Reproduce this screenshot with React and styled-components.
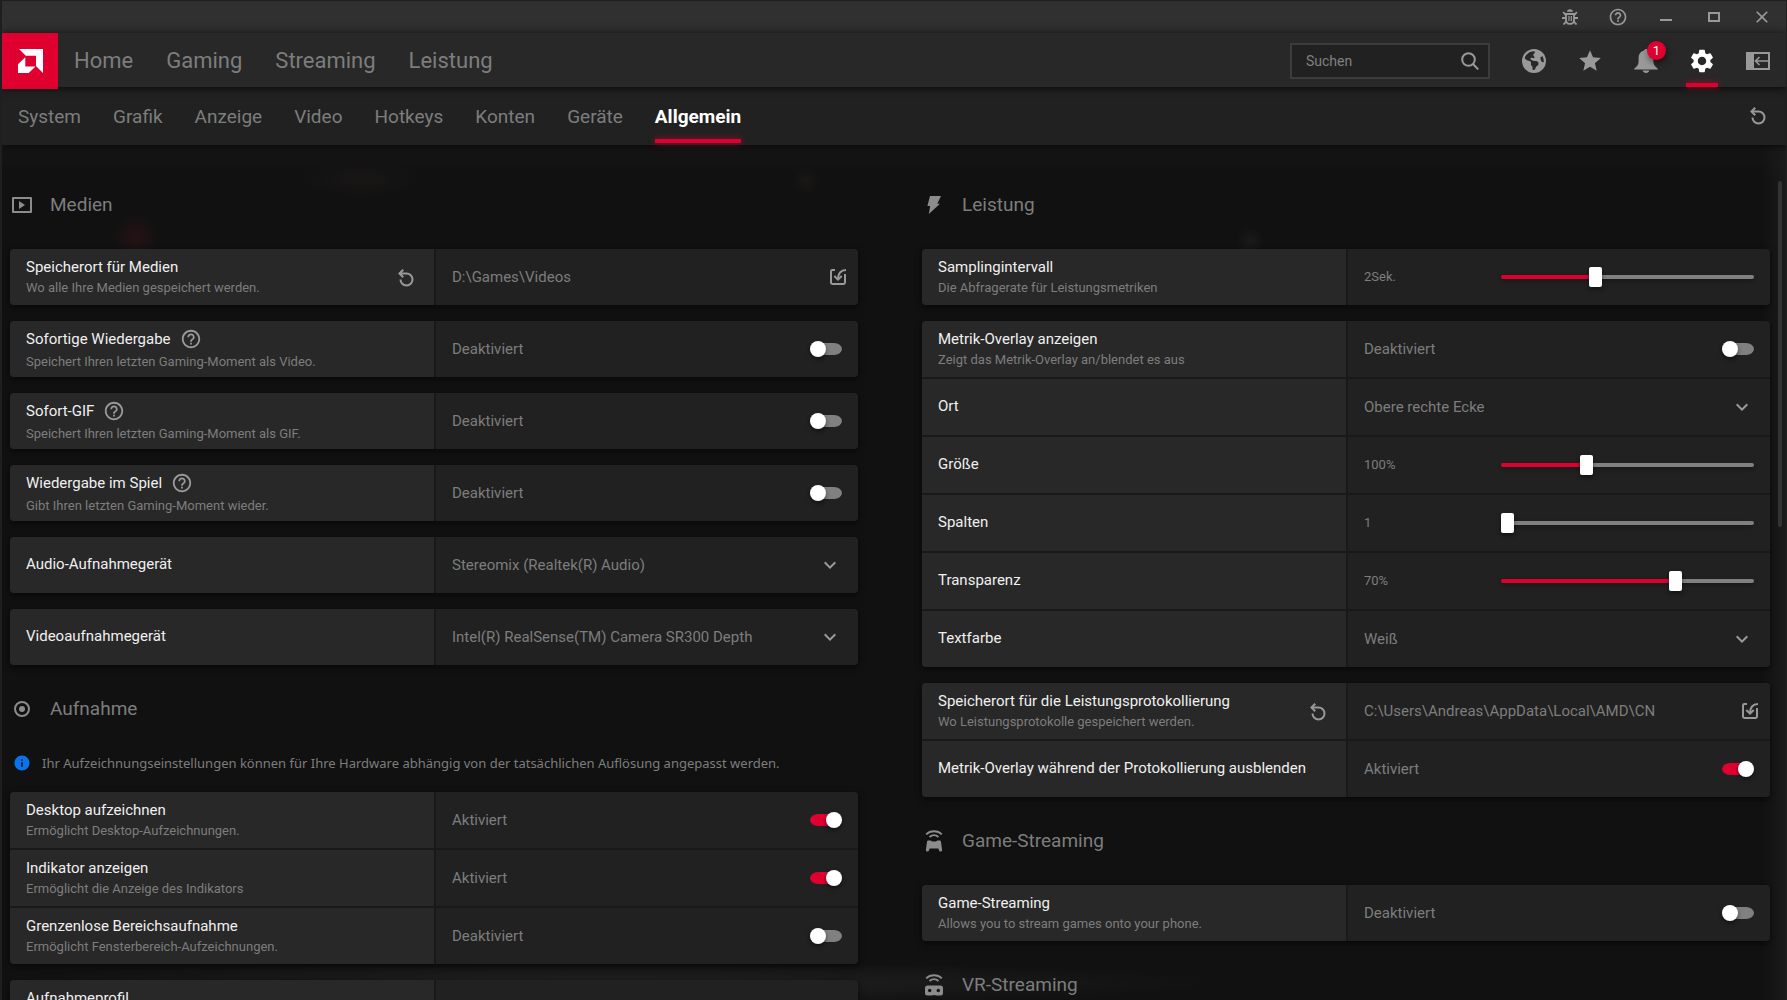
import React, { useId, useState } from 'react';
import styled, { createGlobalStyle, css, ThemeProvider } from 'styled-components';
import { MdClose, MdExpandMore, MdHelpOutline, MdInfo, MdSettings, MdStar } from 'react-icons/md';
import { FaEarthAmericas } from 'react-icons/fa6';

const theme = {
    fonts: {
        primary: "Roboto, 'Liberation Sans', sans-serif",
        secondary: "'Noto Sans', 'Open Sans', sans-serif",
    },
    colors: {
        red: '#df0030',
        text: '#f0f0f0',
        muted: '#7d7d7d',
        icon: '#999999',
        titlebar: '#303030',
        header: '#282828',
        panel: '#212121',
        line: '#191919',
    },
};

const mainNav = ['Home', 'Gaming', 'Streaming', 'Leistung'];
const subNav = ['System', 'Grafik', 'Anzeige', 'Video', 'Hotkeys', 'Konten', 'Geräte', 'Allgemein'];

const leftSections = [
    {
        title: 'Medien',
        icon: 'media',
        groups: [
            [{ title: 'Speicherort für Medien', desc: 'Wo alle Ihre Medien gespeichert werden.', reset: true, type: 'path', value: 'D:\\Games\\Videos' }],
            [{ title: 'Sofortige Wiedergabe', desc: 'Speichert Ihren letzten Gaming-Moment als Video.', help: true, type: 'toggle' }],
            [{ title: 'Sofort-GIF', desc: 'Speichert Ihren letzten Gaming-Moment als GIF.', help: true, type: 'toggle' }],
            [{ title: 'Wiedergabe im Spiel', desc: 'Gibt Ihren letzten Gaming-Moment wieder.', help: true, type: 'toggle' }],
            [{ title: 'Audio-Aufnahmegerät', type: 'select', value: 'Stereomix (Realtek(R) Audio)' }],
            [{ title: 'Videoaufnahmegerät', type: 'select', value: 'Intel(R) RealSense(TM) Camera SR300 Depth' }],
        ],
    },
    {
        title: 'Aufnahme',
        icon: 'record',
        info: 'Ihr Aufzeichnungseinstellungen können für Ihre Hardware abhängig von der tatsächlichen Auflösung angepasst werden.',
        groups: [
            [
                { title: 'Desktop aufzeichnen', desc: 'Ermöglicht Desktop-Aufzeichnungen.', type: 'toggle', on: true },
                { title: 'Indikator anzeigen', desc: 'Ermöglicht die Anzeige des Indikators', type: 'toggle', on: true },
                { title: 'Grenzenlose Bereichsaufnahme', desc: 'Ermöglicht Fensterbereich-Aufzeichnungen.', type: 'toggle' },
            ],
            [{ title: 'Aufnahmeprofil', desc: '\u00a0' }],
        ],
    },
];

const rightSections = [
    {
        title: 'Leistung',
        icon: 'bolt',
        groups: [
            [{ title: 'Samplingintervall', desc: 'Die Abfragerate für Leistungsmetriken', type: 'slider', percent: 37, unit: '2Sek.' }],
            [
                { title: 'Metrik-Overlay anzeigen', desc: 'Zeigt das Metrik-Overlay an/blendet es aus', type: 'toggle' },
                { title: 'Ort', type: 'select', value: 'Obere rechte Ecke' },
                { title: 'Größe', type: 'slider', percent: 33, unit: '100%' },
                { title: 'Spalten', type: 'slider', percent: 0, unit: '1' },
                { title: 'Transparenz', type: 'slider', percent: 70, unit: '70%' },
                { title: 'Textfarbe', type: 'select', value: 'Weiß' },
            ],
            [
                { title: 'Speicherort für die Leistungsprotokollierung', desc: 'Wo Leistungsprotokolle gespeichert werden.', reset: true, type: 'path', value: 'C:\\Users\\Andreas\\AppData\\Local\\AMD\\CN' },
                { title: 'Metrik-Overlay während der Protokollierung ausblenden', type: 'toggle', on: true },
            ],
        ],
    },
    {
        title: 'Game-Streaming',
        icon: 'gamepad',
        groups: [[{ title: 'Game-Streaming', desc: 'Allows you to stream games onto your phone.', type: 'toggle' }]],
    },
    { title: 'VR-Streaming', icon: 'vr', groups: [] },
];

function UndoIcon() {
    return (
        <svg width="16" height="18" viewBox="0 0 16 18" fill="none" stroke="currentColor" strokeWidth="2">
            <path d="M1.5 4.5H8.5a6 6 0 1 1-6 6" />
            <path d="M5.2.8 1.5 4.5l3.7 3.7" />
        </svg>
    );
}

function BrowseIcon() {
    return (
        <svg width="16" height="16" viewBox="0 0 16 16" fill="none" stroke="currentColor" strokeWidth="2">
            <path d="M5 1H2.4A1.4 1.4 0 0 0 1 2.4v11.2A1.4 1.4 0 0 0 2.4 15h11.2a1.4 1.4 0 0 0 1.4-1.4V5" />
            <path d="M16 1C10.5 1 8 4 8 10.5" />
            <path d="M4.3 7 8 10.7 11.7 7" />
        </svg>
    );
}

function BugIcon() {
    return (
        <svg width="16" height="16" viewBox="0 0 16 16" fill="none" stroke="currentColor" strokeWidth="1.8">
            <path d="M5 2.8C5 1 6.2.2 8 .2s3 .8 3 2.6z" fill="currentColor" stroke="none" />
            <path d="M4 5h8v6.5a3.300 3.300 0 0 1-3.300 3.300H7.300A3.300 3.300 0 0 1 4 11.500z" />
            <path d="M7 7v5M9.300 7v5" strokeWidth="1.2" />
            <path d="M4 6.500 1.200 3M12 6.500 14.800 3M4 9H0M12 9h4M4.500 12 1.500 15.500M11.500 12l3 3.500" />
        </svg>
    );
}

function BellIcon() {
    return (
        <svg width="24" height="24" viewBox="0 0 24 24" fill="currentColor">
            <path d="M12 0c-1 0-1.700.6-1.900 1.500C6.500 2.400 4.600 5.500 4.600 9v3.500c0 3-1.600 5-4.400 7.200v.8h23.600v-.8c-2.800-2.200-4.400-4.200-4.400-7.200V9c0-3.500-1.900-6.600-5.500-7.500C13.700.6 13 0 12 0z" />
            <path d="M8.600 21.600h6.800c-.4 1.500-1.700 2.400-3.400 2.400s-3-.9-3.400-2.400z" />
        </svg>
    );
}

function PanelIcon() {
    return (
        <svg width="24" height="18" viewBox="0 0 24 18" fill="none" stroke="currentColor" strokeWidth="2">
            <path d="M1 1h22v16H1z" />
            <path d="M1 1h6v16H1z" fill="currentColor" />
            <path d="M22 9H10M13.5 5 9.5 9l4 4" strokeWidth="1.6" />
        </svg>
    );
}

function SearchIcon() {
    return (
        <svg width="18" height="18" viewBox="0 0 18 18" fill="none" stroke="currentColor" strokeWidth="2">
            <circle cx="7.5" cy="7.5" r="6.3" />
            <path d="m12 12 5.2 5.4" />
        </svg>
    );
}

function LogoIcon() {
    return (
        <svg width="25" height="24" viewBox="0 0 25 24" fill="#ffffff">
            <path d="M1 0h24v24l-7-7V6.7H7.8z" />
            <path d="M7.3 8.2v9.4h10.2L10.7 24H0v-8.7z" />
        </svg>
    );
}

const signal = (
    <g fill="none" stroke="currentColor" strokeWidth="1.8">
        <path d="M1.2 4.4C5.2.2 12.8.2 16.8 4.4" />
        <path d="M4.5 7c2.5-2.4 6.5-2.4 9 0" />
    </g>
);

const sectionIcons = {
    media: (
        <svg width="20" height="16" viewBox="0 0 20 16">
            <path d="M1 1h18v14H1z" fill="none" stroke="currentColor" strokeWidth="2" strokeLinejoin="round" />
            <path d="M7 4v8l6-4z" fill="currentColor" />
        </svg>
    ),
    record: (
        <svg width="16" height="16" viewBox="0 0 16 16">
            <circle cx="8" cy="8" r="7" fill="none" stroke="currentColor" strokeWidth="2" />
            <circle cx="8" cy="8" r="3" fill="currentColor" />
        </svg>
    ),
    bolt: (
        <svg width="14" height="18" viewBox="0 0 14 18" fill="currentColor">
            <path d="M3 0h11l-3.7 7.8h2.7L1.8 18l1.4-8H.4z" />
        </svg>
    ),
    // the pad is a wide body with two short grips
    gamepad: (
        <svg width="18" height="22" viewBox="0 0 18 22" fill="currentColor">
            {signal}
            <path d="M3.2 10.400h2.600l1.200 1h4l1.200-1h2.600c.6 0 1 .3 1.100.9l1.200 8.500c.2 2-2.200 2.400-2.900.9l-.9-2.200H4.700l-.9 2.200c-.7 1.500-3.100 1.100-2.900-.9l1.200-8.500c.1-.6.5-.9 1.100-.9z" />
        </svg>
    ),
    vr: (
        <svg width="18" height="22" viewBox="0 0 18 22" fill="currentColor">
            {signal}
            <path
                fillRule="evenodd"
                d="M2.5 11.5h13A2.500 2.500 0 0 1 18 14v5a2.500 2.500 0 0 1-2.500 2.500h-4L9 21l-2.500.5h-4A2.500 2.500 0 0 1 0 19v-5a2.500 2.500 0 0 1 2.500-2.500zM4.700 14.700a1.800 1.800 0 1 0 0 3.600 1.800 1.800 0 0 0 0-3.600zM13.300 14.700a1.800 1.800 0 1 0 0 3.600 1.800 1.800 0 0 0 0-3.600z"
            />
        </svg>
    ),
};

function Control({ row, id }) {
    const [on, setOn] = useState(Boolean(row.on));
    const [percent, setPercent] = useState(row.percent);

    if (row.type === 'toggle') {
        return (
            <ValueCell>
                <ValueText>{on ? 'Aktiviert' : 'Deaktiviert'}</ValueText>
                <Toggle id={id} type="checkbox" checked={on} onChange={(e) => setOn(e.target.checked)} />
            </ValueCell>
        );
    }
    if (row.type === 'select') {
        return (
            <ValueCell>
                <SelectWrapper>
                    <Select id={id}>
                        <option>{row.value}</option>
                    </Select>
                    <MdExpandMore size={24} />
                </SelectWrapper>
            </ValueCell>
        );
    }
    if (row.type === 'slider') {
        return (
            <ValueCell>
                <ValueText $small>{row.unit}</ValueText>
                <Slider
                    id={id}
                    type="range"
                    min="0"
                    max="100"
                    value={percent}
                    onChange={(e) => setPercent(Number(e.target.value))}
                    style={{ '--fill': `${percent}%` }}
                />
            </ValueCell>
        );
    }
    if (row.type === 'path') {
        return (
            <ValueCell $path>
                <ValueText>{row.value}</ValueText>
                <IconButton type="button" aria-label="Ordner auswählen">
                    <BrowseIcon />
                </IconButton>
            </ValueCell>
        );
    }
    return <ValueCell />;
}

function Setting({ row }) {
    const id = useId();
    const hasInput = ['toggle', 'select', 'slider'].includes(row.type);

    return (
        <Row>
            <LabelCell $described={Boolean(row.desc)}>
                <div>
                    <RowTitle $tall={row.help}>
                        <RowLabel as={hasInput ? 'label' : 'span'} htmlFor={hasInput ? id : undefined}>
                            {row.title}
                        </RowLabel>
                        {row.help && (
                            <IconButton type="button" aria-label={`Hilfe: ${row.title}`}>
                                <MdHelpOutline size={22} />
                            </IconButton>
                        )}
                    </RowTitle>
                    {row.desc && <RowDesc>{row.desc}</RowDesc>}
                </div>
                {row.reset && (
                    <IconButton type="button" aria-label="Zurücksetzen">
                        <UndoIcon />
                    </IconButton>
                )}
            </LabelCell>
            <Control row={row} id={id} />
        </Row>
    );
}

function Section({ section }) {
    return (
        <section>
            <SectionHeading>
                <SectionIcon>{sectionIcons[section.icon]}</SectionIcon>
                {section.title}
            </SectionHeading>
            {section.info && (
                <Info>
                    <SectionIcon>
                        <MdInfo size={18} />
                    </SectionIcon>
                    {section.info}
                </Info>
            )}
            <Groups>
                {section.groups.map((rows) => (
                    <Group key={rows[0].title}>
                        {rows.map((row) => (
                            <Setting key={row.title} row={row} />
                        ))}
                    </Group>
                ))}
            </Groups>
        </section>
    );
}

function App() {
    return (
        <ThemeProvider theme={theme}>
            <GlobalStyle />
            <Window>
                <TitleBar>
                    <WindowButton type="button" aria-label="Fehler melden"><BugIcon /></WindowButton>
                    <WindowButton type="button" aria-label="Hilfe"><MdHelpOutline size={20} /></WindowButton>
                    <WindowButton type="button" aria-label="Minimieren">
                        <svg width="12" height="10" viewBox="0 0 12 10"><path d="M0 7h12v2H0z" fill="currentColor" /></svg>
                    </WindowButton>
                    <WindowButton type="button" aria-label="Maximieren">
                        <svg width="12" height="10" viewBox="0 0 12 10"><path d="M1 1h10v8H1z" fill="none" stroke="currentColor" strokeWidth="2" /></svg>
                    </WindowButton>
                    <WindowButton type="button" aria-label="Schließen"><MdClose size={20} /></WindowButton>
                </TitleBar>

                <Header>
                    <Logo href="#" aria-label="AMD"><LogoIcon /></Logo>
                    <MainNav>
                        {mainNav.map((name) => (
                            <MainLink key={name} href="#">{name}</MainLink>
                        ))}
                    </MainNav>
                    <Search>
                        <SearchInput type="text" placeholder="Suchen" aria-label="Suchen" />
                        <IconButton type="button" aria-label="Suche starten"><SearchIcon /></IconButton>
                    </Search>
                    <HeaderButton type="button" aria-label="Browser"><FaEarthAmericas size={24} /></HeaderButton>
                    <HeaderButton type="button" aria-label="Favoriten"><MdStar size={26} /></HeaderButton>
                    <HeaderButton type="button" aria-label="Benachrichtigungen">
                        <BellIcon />
                        <Badge>1</Badge>
                    </HeaderButton>
                    <HeaderButton type="button" aria-label="Einstellungen" $active><MdSettings size={28} /></HeaderButton>
                    <HeaderButton type="button" aria-label="Seitenleiste"><PanelIcon /></HeaderButton>
                </Header>

                <SubHeader>
                    <SubNav>
                        {subNav.map((name) => (
                            <SubLink key={name} href="#" $active={name === 'Allgemein'}>{name}</SubLink>
                        ))}
                    </SubNav>
                    <HeaderButton type="button" aria-label="Alles zurücksetzen"><UndoIcon /></HeaderButton>
                </SubHeader>

                <Content>
                    <Column>
                        {leftSections.map((section) => <Section key={section.title} section={section} />)}
                    </Column>
                    <Column>
                        {rightSections.map((section) => <Section key={section.title} section={section} />)}
                    </Column>
                    <ScrollThumb />
                </Content>
            </Window>
        </ThemeProvider>
    );
}

export default App;

const GlobalStyle = createGlobalStyle`
    * {
        box-sizing: border-box;
    }

    body {
        margin: 0;
        background: #1c1c1c;
        font-family: ${({ theme }) => theme.fonts.primary};
        color: ${({ theme }) => theme.colors.text};
    }

    button, input, select {
        font-family: inherit;
    }

    svg {
        display: block;
        flex-shrink: 0;
    }
`;

const Window = styled.div`
    height: 100vh;
    display: flex;
    flex-direction: column;
    overflow: hidden;
    border: solid #1f1f1f;
    border-width: 1px 1px 0 2px;
`;

const TitleBar = styled.div`
    flex: none;
    height: 32px;
    display: flex;
    justify-content: flex-end;
    background: ${({ theme }) => theme.colors.titlebar};
`;

const WindowButton = styled.button`
    width: 48px;
    padding: 0;
    display: flex;
    align-items: center;
    justify-content: center;
    border: 0;
    background: none;
    color: ${({ theme }) => theme.colors.icon};
`;

const Header = styled.header`
    position: relative;
    z-index: 2;
    flex: none;
    height: 54px;
    padding-top: 2px;
    display: flex;
    align-items: center;
    background: ${({ theme }) => theme.colors.header};
    box-shadow: 0 1px 8px rgba(0, 0, 0, 0.8);
`;

const Logo = styled.a`
    align-self: flex-start;
    width: 56px;
    height: 56px;
    margin-top: -2px;
    display: flex;
    align-items: center;
    justify-content: center;
    background: ${({ theme }) => theme.colors.red};
`;

const MainNav = styled.nav`
    flex: 1;
    display: flex;
    gap: 33px;
    padding-left: 16px;
`;

const MainLink = styled.a`
    font-size: 22px;
    line-height: 32px;
    color: ${({ theme }) => theme.colors.muted};
    text-decoration: none;
`;

const Search = styled.div`
    width: 200px;
    height: 36px;
    margin-right: 16px;
    padding: 0 6px 0 14px;
    display: flex;
    align-items: center;
    border: 2px solid #3c3c3c;
    background: ${({ theme }) => theme.colors.panel};
`;

const SearchInput = styled.input`
    flex: 1;
    min-width: 0;
    padding: 0;
    border: 0;
    outline: 0;
    background: none;
    font-size: 14px;
    color: ${({ theme }) => theme.colors.text};

    &::placeholder {
        color: #808080;
        opacity: 1;
    }
`;

const glow = css`
    background: ${({ theme }) => theme.colors.red};
    box-shadow: 0 0 6px rgba(223, 0, 48, 0.7);
`;

const HeaderButton = styled.button`
    position: relative;
    width: 56px;
    height: 52px;
    padding: 0;
    display: flex;
    align-items: center;
    justify-content: center;
    border: 0;
    background: none;
    color: ${({ $active, theme }) => ($active ? '#ffffff' : theme.colors.icon)};

    ${({ $active }) => $active && css`
        &::after {
            content: '';
            position: absolute;
            bottom: 0;
            left: 12px;
            width: 32px;
            height: 4px;
            ${glow}
        }
    `}
`;

const Badge = styled.span`
    position: absolute;
    top: 6px;
    right: 8px;
    width: 19px;
    height: 19px;
    border-radius: 50%;
    background: ${({ theme }) => theme.colors.red};
    box-shadow: 1px 3px 6px rgba(0, 0, 0, 0.5);
    font-size: 13px;
    line-height: 19px;
    text-align: center;
    color: #ffffff;
`;

const SubHeader = styled.div`
    position: relative;
    z-index: 1;
    flex: none;
    height: 58px;
    display: flex;
    align-items: center;
    justify-content: space-between;
    background: ${({ theme }) => theme.colors.panel};
    box-shadow: 0 1px 8px rgba(0, 0, 0, 0.7);
`;

const SubNav = styled.nav`
    display: flex;
    gap: 32px;
    padding-left: 16px;
`;

const SubLink = styled.a`
    position: relative;
    padding-top: 2px;
    font-size: 19px;
    line-height: 56px;
    color: ${({ theme }) => theme.colors.muted};
    text-decoration: none;

    ${({ $active }) => $active && css`
        font-weight: 700;
        color: #ffffff;

        &::after {
            content: '';
            position: absolute;
            left: 0;
            right: 0;
            bottom: 2px;
            height: 4px;
            ${glow}
        }
    `}
`;

const Content = styled.main`
    position: relative;
    flex: 1;
    min-height: 0;
    overflow: hidden;
    display: grid;
    grid-template-columns: 1fr 1fr;
    align-items: start;
    gap: 64px;
    padding: 16px 16px 0 8px;
    background:
        radial-gradient(circle at 134px 92px, rgba(120, 20, 35, 0.2), transparent 24px),
        radial-gradient(ellipse 60px 18px at 360px 34px, rgba(70, 55, 50, 0.15), transparent),
        radial-gradient(circle at 804px 36px, rgba(80, 65, 50, 0.14), transparent 14px),
        radial-gradient(circle at 1248px 96px, rgba(80, 80, 80, 0.15), transparent 14px),
        radial-gradient(ellipse 620px 22px at 600px 838px, rgba(60, 60, 60, 0.4), transparent),
        linear-gradient(to right, transparent calc(100% - 24px), #1b1b1b),
        linear-gradient(#161616, #111111 28px);
`;

const Column = styled.div`
    min-width: 0;
`;

const SectionHeading = styled.h2`
    height: 88px;
    margin: 0;
    display: flex;
    align-items: center;
    gap: 16px;
    font-size: 19px;
    font-weight: 400;
    line-height: 22px;
    color: ${({ theme }) => theme.colors.muted};
`;

const SectionIcon = styled.span`
    width: 24px;
    display: flex;
    justify-content: center;
    color: #8c8c8c;
`;

const Info = styled.p`
    margin: 0;
    padding-bottom: 19px;
    display: flex;
    align-items: center;
    gap: 8px;
    font-family: ${({ theme }) => theme.fonts.secondary};
    font-size: 13px;
    line-height: 20px;
    color: ${({ theme }) => theme.colors.muted};

    ${SectionIcon} {
        color: #0a73eb;
    }
`;

const Groups = styled.div`
    display: grid;
    gap: 16px;
`;

const Group = styled.div`
    display: grid;
    gap: 2px;
    border-radius: 4px;
    overflow: hidden;
    background: ${({ theme }) => theme.colors.line};
    box-shadow: 0 2px 6px rgba(0, 0, 0, 0.6);
`;

const Row = styled.div`
    display: grid;
    grid-template-columns: 424fr 422fr;
    gap: 2px;
    min-height: 56px;
`;

const LabelCell = styled.div`
    padding: ${({ $described }) => ($described ? '1px 16px 0' : '0 16px 2px')};
    display: flex;
    align-items: center;
    justify-content: space-between;
    background: ${({ theme }) => theme.colors.header};
`;

const RowTitle = styled.div`
    height: ${({ $tall }) => ($tall ? '24px' : '20px')};
    display: flex;
    align-items: center;
    gap: 8px;
`;

const RowLabel = styled.label`
    font-size: 15px;
    line-height: 20px;
    white-space: nowrap;
`;

const RowDesc = styled.div`
    margin-top: 1px;
    font-size: 13px;
    line-height: 20px;
    white-space: nowrap;
    color: ${({ theme }) => theme.colors.muted};
`;

const IconButton = styled.button`
    width: 24px;
    height: 24px;
    padding: 0;
    display: flex;
    align-items: center;
    justify-content: center;
    border: 0;
    background: none;
    color: ${({ theme }) => theme.colors.icon};
`;

const ValueCell = styled.div`
    min-width: 0;
    padding: 0 ${({ $path }) => ($path ? '8px' : '16px')} 0 16px;
    display: flex;
    align-items: center;
    justify-content: space-between;
    background: ${({ theme }) => theme.colors.panel};
`;

const ValueText = styled.span`
    font-size: ${({ $small }) => ($small ? '13px' : '15px')};
    line-height: 20px;
    color: ${({ theme }) => theme.colors.muted};
`;

const Toggle = styled.input`
    appearance: none;
    width: 32px;
    height: 16px;
    margin: 0;
    display: flex;
    align-items: center;
    justify-content: ${({ checked }) => (checked ? 'flex-end' : 'flex-start')};
    border-radius: 8px;
    background: linear-gradient(
        ${({ checked, theme }) => (checked ? theme.colors.red : '#808080')},
        ${({ checked, theme }) => (checked ? theme.colors.red : '#808080')}
    ) content-box;
    padding: 2px 0;

    &::before {
        content: '';
        flex: none;
        width: 16px;
        height: 16px;
        border-radius: 50%;
        background: #ffffff;
        box-shadow: 0 2px 4px rgba(0, 0, 0, 0.5);
    }
`;

const SelectWrapper = styled.div`
    flex: 1;
    display: grid;
    align-items: center;
    color: ${({ theme }) => theme.colors.icon};

    > * {
        grid-area: 1 / 1;
    }

    svg {
        justify-self: end;
        pointer-events: none;
    }
`;

const Select = styled.select`
    appearance: none;
    width: 100%;
    height: 40px;
    padding: 0;
    border: 0;
    outline: 0;
    background: none;
    font-size: 15px;
    color: ${({ theme }) => theme.colors.muted};
`;

const Slider = styled.input`
    appearance: none;
    width: 65%;
    height: 20px;
    margin: 0;
    background: none;

    &::-webkit-slider-runnable-track {
        height: 4px;
        border-radius: 2px;
        background: linear-gradient(
            to right,
            ${({ theme }) => theme.colors.red} var(--fill),
            #808080 var(--fill)
        );
        box-shadow: 0 2px 4px rgba(0, 0, 0, 0.3);
    }

    &::-webkit-slider-thumb {
        appearance: none;
        width: 13px;
        height: 20px;
        margin-top: -8px;
        border-radius: 2px;
        background: #ffffff;
        box-shadow: 0 2px 4px rgba(0, 0, 0, 0.5);
    }
`;

const ScrollThumb = styled.div`
    position: absolute;
    top: 36px;
    right: 4px;
    width: 4px;
    height: 346px;
    border-radius: 2px;
    background: #333333;
`;
